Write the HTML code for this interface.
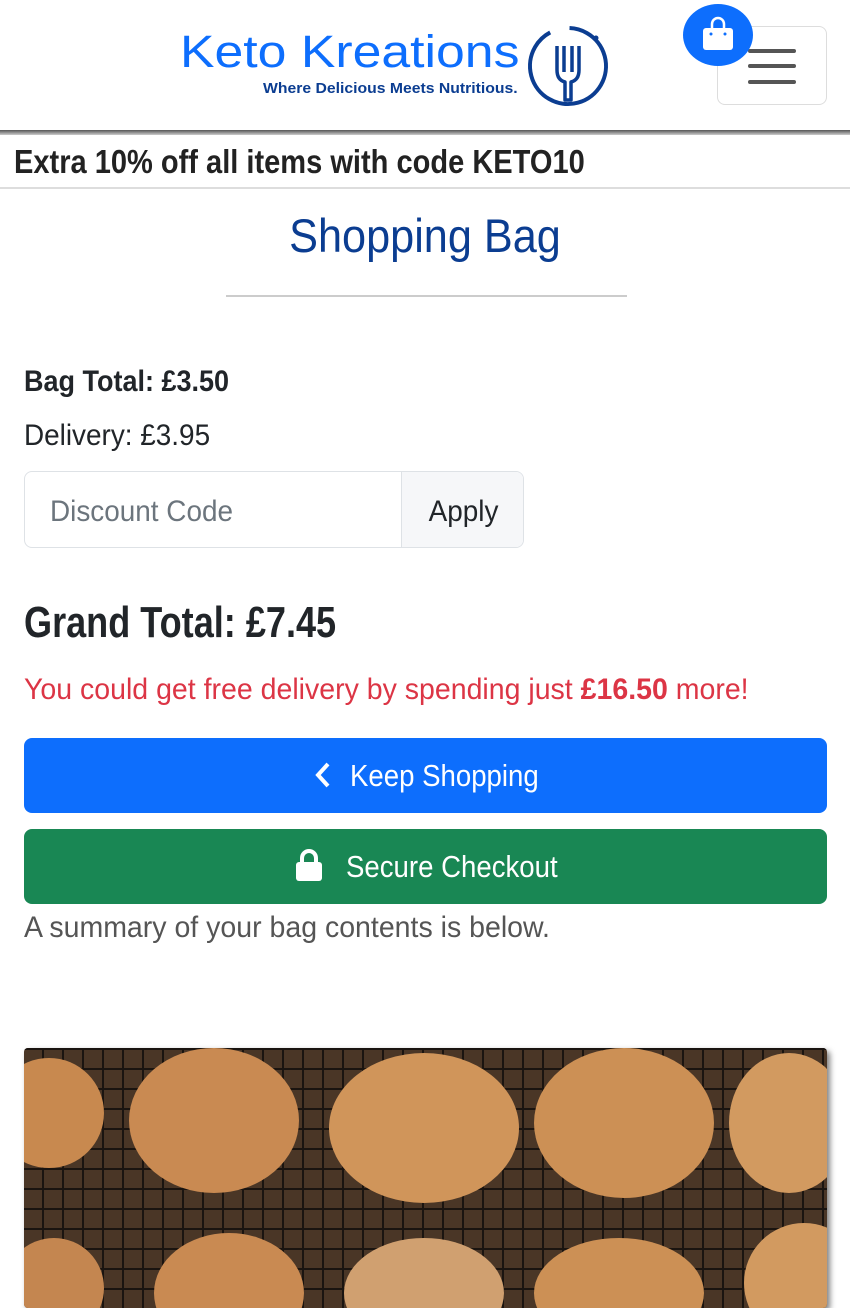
<!DOCTYPE html>
<html><head><meta charset="utf-8"><style>
*{box-sizing:border-box;margin:0;padding:0}
body{width:850px;height:1298px;overflow:hidden;background:#fff;font-family:"Liberation Sans",sans-serif;color:#212529;position:relative}
.a{position:absolute;white-space:nowrap}
.s{transform-origin:left center}
</style></head><body>
<div class="a s" style="left:180px;top:29px;font-size:45px;color:#0d6efd;line-height:1;transform:scaleX(1.15)">Keto Kreations</div>
<div class="a s" style="left:263px;top:81px;font-size:15px;font-weight:bold;color:#0b3d91;line-height:1;transform:scaleX(1.05)">Where Delicious Meets Nutritious.</div>
<svg class="a" style="left:524px;top:22px" width="90" height="88" viewBox="0 0 90 88">
<circle cx="44" cy="44" r="38" fill="none" stroke="#0b3d91" stroke-width="4" stroke-dasharray="200 20" transform="rotate(-60 44 44)"/>
<circle cx="72" cy="16" r="2.5" fill="#0b3d91"/>
<path d="M33 24 L33 48 Q33 58 41 60 L41 78 L47 78 L47 60 Q55 58 55 48 L55 24 M40 24 L40 50 M48 24 L48 50" fill="none" stroke="#0b3d91" stroke-width="3.5" stroke-linejoin="round"/>
</svg>
<div class="a" style="left:717px;top:26px;width:110px;height:79px;border:1px solid #ddd;border-radius:8px"></div>
<div class="a" style="left:748px;top:49px;width:48px;height:4px;background:#555;border-radius:2px"></div>
<div class="a" style="left:748px;top:64px;width:48px;height:4px;background:#555;border-radius:2px"></div>
<div class="a" style="left:748px;top:80px;width:48px;height:4px;background:#555;border-radius:2px"></div>
<div class="a" style="left:683px;top:4px;width:70px;height:62px;border-radius:50%;background:#0d6efd"></div>
<svg class="a" style="left:701px;top:16px" width="34" height="36" viewBox="0 0 34 36"><path d="M11 12 V8 a6 6 0 0 1 12 0 V12" fill="none" stroke="#fff" stroke-width="2.5"/><rect x="2" y="12" width="30" height="22" rx="3" fill="#fff"/><circle cx="10" cy="18" r="1.5" fill="#0d6efd"/><circle cx="24" cy="18" r="1.5" fill="#0d6efd"/></svg>
<div class="a" style="left:0;top:130px;width:850px;height:5px;background:linear-gradient(#555,#ccc)"></div>
<div class="a s" style="left:14px;top:142px;font-size:33px;font-weight:bold;line-height:40px;color:#222;transform:scaleX(0.88)">Extra 10% off all items with code KETO10</div>
<div class="a" style="left:0;top:187px;width:850px;height:2px;background:#ddd"></div>
<div class="a" style="left:0;top:208px;width:850px;text-align:center;font-size:47px;color:#0b3d91;line-height:56px;transform:scaleX(0.92)">Shopping Bag</div>
<div class="a" style="left:226px;top:295px;width:401px;height:2px;background:#ccc"></div>
<div class="a s" style="left:24px;top:362px;font-size:30px;font-weight:bold;line-height:40px;transform:scaleX(0.9)">Bag Total: £3.50</div>
<div class="a s" style="left:24px;top:416px;font-size:30px;line-height:40px;transform:scaleX(0.93)">Delivery: £3.95</div>
<div class="a" style="left:24px;top:471px;width:500px;height:77px;border:1px solid #dee2e6;border-radius:8px;overflow:hidden">
<div class="a s" style="left:25px;top:20px;font-size:30px;color:#6c757d;line-height:40px;transform:scaleX(0.93)">Discount Code</div>
<div class="a" style="left:376px;top:0;width:124px;height:77px;background:#f6f7f9;border-left:1px solid #dee2e6;font-size:30px;line-height:79px;text-align:center"><span style="display:inline-block;transform:scaleX(0.93)">Apply</span></div>
</div>
<div class="a s" style="left:24px;top:598px;font-size:44px;font-weight:bold;line-height:50px;transform:scaleX(0.82)">Grand Total: £7.45</div>
<div class="a s" style="left:24px;top:670px;font-size:30px;color:#dc3545;line-height:40px;transform:scaleX(0.95)">You could get free delivery by spending just <b>£16.50</b> more!</div>
<div class="a" style="left:24px;top:738px;width:803px;height:75px;background:#0d6efd;border-radius:8px;color:#fff;font-size:31px;line-height:75px;text-align:center"><svg width="18" height="28" viewBox="0 0 18 28" style="vertical-align:-3px;margin-right:18px"><path d="M14 3 L4 14 L14 25" fill="none" stroke="#fff" stroke-width="4"/></svg><span style="display:inline-block;transform:scaleX(0.89);transform-origin:left center;width:188px;text-align:left">Keep Shopping</span></div>
<div class="a" style="left:24px;top:829px;width:803px;height:75px;background:#198754;border-radius:8px;color:#fff;font-size:31px;line-height:75px;text-align:center"><svg width="30" height="32" viewBox="0 0 30 32" style="vertical-align:-4px;margin-right:22px"><path d="M8 14 V9 a7 7 0 0 1 14 0 V14" fill="none" stroke="#fff" stroke-width="4"/><rect x="2" y="13" width="26" height="19" rx="3" fill="#fff"/></svg><span style="display:inline-block;transform:scaleX(0.89);transform-origin:left center;width:212px;text-align:left">Secure Checkout</span></div>
<div class="a s" style="left:24px;top:908px;font-size:30px;color:#555;line-height:40px;transform:scaleX(0.95)">A summary of your bag contents is below.</div>
<div class="a" style="left:24px;top:1048px;width:803px;height:260px;background:#4a3626;box-shadow:3px 3px 6px rgba(0,0,0,.5);border-radius:4px;overflow:hidden">
<div style="position:absolute;inset:0;background:repeating-linear-gradient(90deg,transparent 0 18px,#1a1410 18px 20px),repeating-linear-gradient(0deg,transparent 0 18px,#1a1410 18px 20px)"></div>
<div class="a" style="left:-30px;top:10px;width:110px;height:110px;border-radius:50%;background:#c8894f"></div>
<div class="a" style="left:105px;top:0px;width:170px;height:145px;border-radius:50%;background:#c98a52"></div>
<div class="a" style="left:305px;top:5px;width:190px;height:150px;border-radius:50%;background:#d0955a"></div>
<div class="a" style="left:510px;top:0px;width:180px;height:150px;border-radius:50%;background:#cc9055"></div>
<div class="a" style="left:705px;top:5px;width:120px;height:140px;border-radius:50%;background:#d29a60"></div>
<div class="a" style="left:-20px;top:190px;width:100px;height:100px;border-radius:50%;background:#c48650"></div>
<div class="a" style="left:130px;top:185px;width:150px;height:120px;border-radius:50%;background:#c98a52"></div>
<div class="a" style="left:320px;top:190px;width:160px;height:110px;border-radius:50%;background:#d0a070"></div>
<div class="a" style="left:510px;top:190px;width:170px;height:110px;border-radius:50%;background:#cc9055"></div>
<div class="a" style="left:720px;top:175px;width:120px;height:120px;border-radius:50%;background:#d29a60"></div>
</div>
</body></html>
